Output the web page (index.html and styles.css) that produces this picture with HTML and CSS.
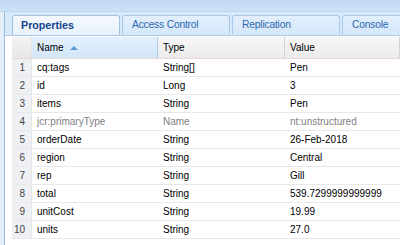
FILE: index.html
```html
<!DOCTYPE html>
<html lang="en">
<head>
	<meta charset="UTF-8">
	<title>Properties</title>
	<link rel="stylesheet" href="styles.css">
</head>
<body>
	<div class="topbar"></div>
	<div class="panel">
		<div class="tabstrip">
			<div class="tab active">Properties</div>
			<div class="tab">Access Control</div>
			<div class="tab">Replication</div>
			<div class="tab">Console</div>
		</div>
		<div class="grid">
			<div class="row head">
				<div class="num"></div>
				<div class="cell sorted">Name <span class="arrow"></span></div>
				<div class="cell">Type</div>
				<div class="cell">Value</div>
			</div>
			<div class="row"><div class="num">1</div><div class="cell">cq:tags</div><div class="cell">String[]</div><div class="cell">Pen</div></div>
			<div class="row"><div class="num">2</div><div class="cell">id</div><div class="cell">Long</div><div class="cell">3</div></div>
			<div class="row"><div class="num">3</div><div class="cell">items</div><div class="cell">String</div><div class="cell">Pen</div></div>
			<div class="row prot"><div class="num">4</div><div class="cell">jcr:primaryType</div><div class="cell">Name</div><div class="cell">nt:unstructured</div></div>
			<div class="row"><div class="num">5</div><div class="cell">orderDate</div><div class="cell">String</div><div class="cell">26-Feb-2018</div></div>
			<div class="row"><div class="num">6</div><div class="cell">region</div><div class="cell">String</div><div class="cell">Central</div></div>
			<div class="row"><div class="num">7</div><div class="cell">rep</div><div class="cell">String</div><div class="cell">Gill</div></div>
			<div class="row"><div class="num">8</div><div class="cell">total</div><div class="cell">String</div><div class="cell">539.7299999999999</div></div>
			<div class="row"><div class="num">9</div><div class="cell">unitCost</div><div class="cell">String</div><div class="cell">19.99</div></div>
			<div class="row"><div class="num">10</div><div class="cell">units</div><div class="cell">String</div><div class="cell">27.0</div></div>
		</div>
	</div>
</body>
</html>
```

FILE: styles.css
```css
body{
	margin: 0;
	height: 245px;
	overflow: hidden;
	background: #e6eef8;
	font-family: "Liberation Sans", Arial, sans-serif;
	font-size: 10px;
	color: #000;
}
.topbar{
	height: 11px;
	background: linear-gradient(#c1d8f2, #cde1f6);
	border-bottom: 1px solid #bcd4ef;
}
.panel{
	margin-left: 4px;
	height: 233px;
	border-left: 1px solid #99bbe8;
	background: #fff;
}
.tabstrip{
	height: 24px;
	box-sizing: border-box;
	padding: 3px 0 0 7px;
	display: flex;
	gap: 2px;
	align-items: flex-start;
	background: #d8e9f9;
	border-bottom: 1px solid #a9c8e8;
	overflow: hidden;
}
.tab{
	flex: none;
	width: 108px;
	height: 19px;
	box-sizing: border-box;
	padding-left: 9px;
	line-height: 18px;
	font-size: 10.3px;
	letter-spacing: -0.2px;
	color: #2d68b0;
	background: linear-gradient(#e2effc, #d5e7f9);
	border: 1px solid #a7c8e9;
	border-bottom: none;
	border-radius: 3px 3px 0 0;
}
.tab.active{
	height: 21px;
	padding-left: 8px;
	font-size: 10.7px;
	letter-spacing: 0;
	font-weight: bold;
	color: #15428b;
	background: linear-gradient(#f4f9fe, #e6f1fc);
	border-color: #9fc1e5;
}
.grid{
	padding-left: 7px;
	padding-top: 1px;
}
.row{
	display: grid;
	grid-template-columns: 20px 126px 127px 1fr;
	height: 18px;
	box-sizing: border-box;
	border-bottom: 1px solid #e8e8e8;
	line-height: 17px;
}
.row.head{
	height: 22px;
	line-height: 21px;
	background: linear-gradient(#f7f7f7, #ebebeb);
	border-bottom: 1px solid #ecd6d6;
}
.num{
	text-align: right;
	padding-right: 6px;
	color: #444;
	background: #eef0f3;
	border-right: 1px solid #e2e5e9;
}
.head .num{
	background: linear-gradient(#f3f3f3, #e6e6e6);
}
.cell{
	padding-left: 5px;
	white-space: nowrap;
	overflow: hidden;
}
.head .cell{
	border-right: 1px solid #d3d3d3;
}
.head .cell.sorted{
	background: linear-gradient(#e3f0fc, #d3e7f9);
	border-right: 1px solid #a9cbe9;
}
.arrow{
	display: inline-block;
	margin-left: 4px;
	vertical-align: middle;
	border-left: 4px solid transparent;
	border-right: 4px solid transparent;
	border-bottom: 4px solid #5a9bd8;
}
.prot{
	color: #808080;
}
```
